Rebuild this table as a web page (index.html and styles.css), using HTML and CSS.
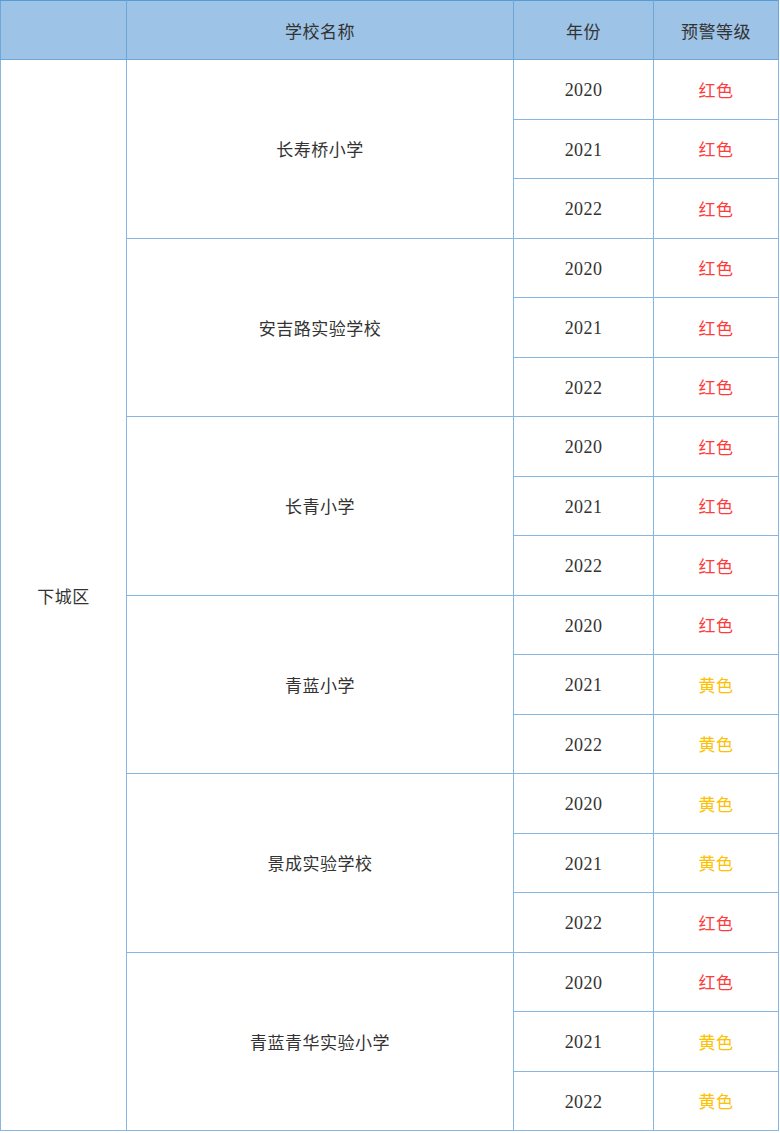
FILE: index.html
```html
<!DOCTYPE html>
<html lang="zh">
<head>
<meta charset="utf-8">
<link rel="stylesheet" href="styles.css">
</head>
<body>
<table class="grid">
  <colgroup>
    <col class="c1"><col class="c2"><col class="c3"><col class="c4">
  </colgroup>
  <thead>
    <tr class="head"><th></th><th>学校名称</th><th>年份</th><th>预警等级</th></tr>
  </thead>
  <tbody>
    <tr><td rowspan="18" class="district">下城区</td><td rowspan="3">长寿桥小学</td><td class="year">2020</td><td class="red">红色</td></tr>
    <tr><td class="year">2021</td><td class="red">红色</td></tr>
    <tr><td class="year">2022</td><td class="red">红色</td></tr>
    <tr><td rowspan="3">安吉路实验学校</td><td class="year">2020</td><td class="red">红色</td></tr>
    <tr><td class="year">2021</td><td class="red">红色</td></tr>
    <tr><td class="year">2022</td><td class="red">红色</td></tr>
    <tr><td rowspan="3">长青小学</td><td class="year">2020</td><td class="red">红色</td></tr>
    <tr><td class="year">2021</td><td class="red">红色</td></tr>
    <tr><td class="year">2022</td><td class="red">红色</td></tr>
    <tr><td rowspan="3">青蓝小学</td><td class="year">2020</td><td class="red">红色</td></tr>
    <tr><td class="year">2021</td><td class="yellow">黄色</td></tr>
    <tr><td class="year">2022</td><td class="yellow">黄色</td></tr>
    <tr><td rowspan="3">景成实验学校</td><td class="year">2020</td><td class="yellow">黄色</td></tr>
    <tr><td class="year">2021</td><td class="yellow">黄色</td></tr>
    <tr><td class="year">2022</td><td class="red">红色</td></tr>
    <tr><td rowspan="3">青蓝青华实验小学</td><td class="year">2020</td><td class="red">红色</td></tr>
    <tr><td class="year">2021</td><td class="yellow">黄色</td></tr>
    <tr><td class="year">2022</td><td class="yellow">黄色</td></tr>
  </tbody>
</table>
</body>
</html>
```

FILE: styles.css
```css
html, body {
  margin: 0;
  padding: 0;
  background: #ffffff;
}

.grid {
  border-collapse: collapse;
  table-layout: fixed;
  width: 778px;
  border: 1px solid #5b9bd5;
  font-family: "Liberation Serif", "Noto Sans CJK SC", serif;
  font-size: 17px;
  color: #333333;
}

.c1 { width: 126px; }
.c2 { width: 387px; }
.c3 { width: 140px; }
.c4 { width: 125px; }

.grid th,
.grid td {
  border: 1px solid #86b6e3;
  text-align: center;
  vertical-align: middle;
  padding: 0;
  font-weight: normal;
  letter-spacing: 0.5px;
}

.grid td {
  font-family: "Noto Sans CJK SC", sans-serif;
}

.grid td.year {
  font-family: "Liberation Serif", serif;
  font-size: 18px;
  letter-spacing: 0.4px;
  padding-top: 3px;
}

.head {
  height: 59px;
  background: #9dc3e6;
}

.head th {
  border-color: #6fa6da;
  border-top-color: #5b9bd5;
  font-family: "Noto Sans CJK SC", sans-serif;
  color: #333333;
}

.grid tbody tr {
  height: 59.5px;
}

.district {
  border-left-color: #5b9bd5;
}

.red { color: #ff3b3b; }
.yellow { color: #ffc000; }
```
